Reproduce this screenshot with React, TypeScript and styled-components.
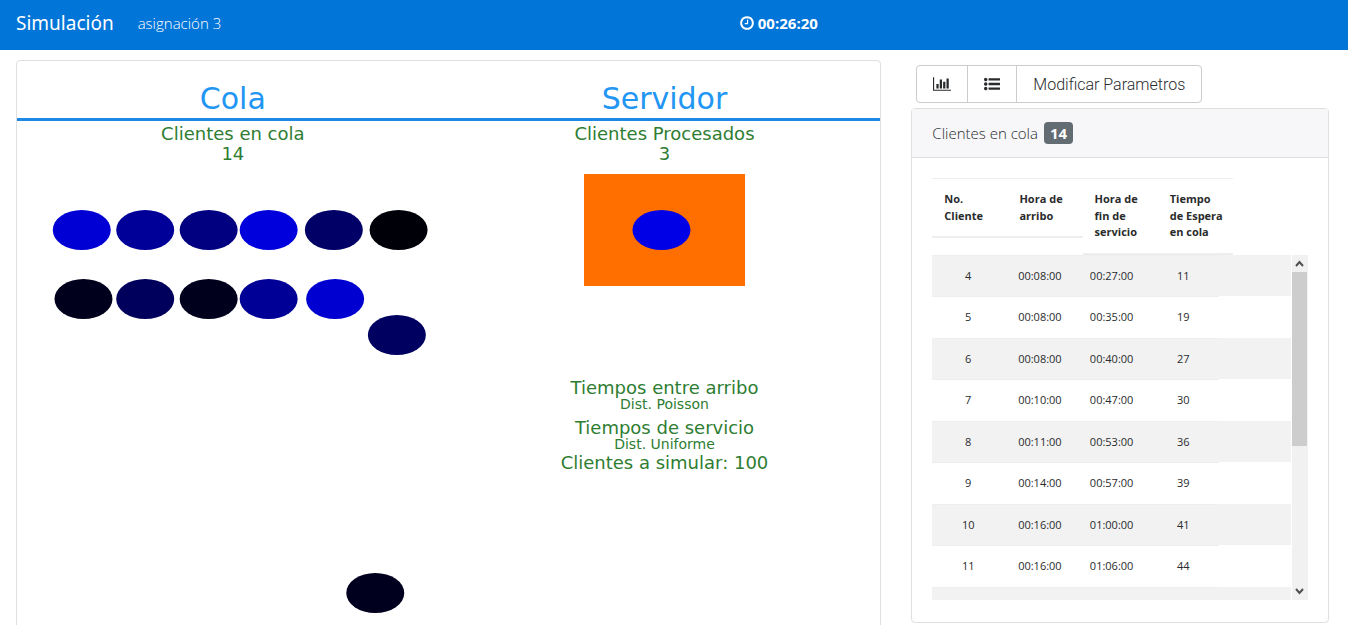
import React from "react";
import styled, { createGlobalStyle } from "styled-components";

const GlobalStyle = createGlobalStyle`
  *, *::before, *::after { box-sizing: border-box; }
  body {
    margin: 0;
    background: #fff;
    color: #292b2c;
    font-family: "Open Sans", "Noto Sans", sans-serif;
    font-size: 16px;
    line-height: 1.5;
  }
`;

const Navbar = styled.nav`
  display: flex;
  align-items: center;
  height: 50px;
  padding: 0 16px 4px;
  background: #0275d8;
  color: #fff;
`;

const NavStart = styled.div`
  display: flex;
  align-items: center;
  gap: 24px;
  flex: 0 0 55%;
`;

const Brand = styled.a`
  color: #fff;
  font-family: "Noto Sans", sans-serif;
  font-size: 19px;
  text-decoration: none;
`;

const NavText = styled.span`
  font-size: 15px;
  font-weight: 300;
`;

const Timer = styled.time`
  display: flex;
  align-items: center;
  gap: 4px;
  font-size: 15px;
  font-weight: 700;
`;

const Row = styled.main`
  display: grid;
  grid-template-columns: 2fr 1fr;
  align-items: start;
  padding: 10px 4px 0 1px;
`;

const Column = styled.div`
  min-width: 0;
  padding: 0 15px;
`;

const Card = styled.section`
  border: 1px solid #dfdfdf;
  border-radius: 4px;
  background: #fff;
`;

const Stage = styled(Card)`
  position: relative;
  display: grid;
  grid-template-columns: 1fr 1fr;
  grid-template-rows: 60px auto;
  min-height: 720px;
  font-family: "DejaVu Sans", sans-serif;
  text-align: center;
`;

const StageTitle = styled.h2`
  margin: 0;
  padding-top: 20px;
  border-bottom: 3px solid #1e88e5;
  color: #2196f3;
  font-size: 30px;
  font-weight: 400;
  line-height: 36px;
`;

const StageArea = styled.div`
  display: flex;
  flex-direction: column;
  align-items: center;
  padding-top: 4px;
  color: #2e7d32;
`;

const Counter = styled.div`
  display: grid;
  gap: 2px;
`;

const StageText = styled.p<{ $small?: boolean }>`
  margin: 0;
  font-size: ${(p) => (p.$small ? 14 : 18)}px;
  line-height: ${(p) => (p.$small ? 14 : 18)}px;
`;

const ServerBox = styled.div`
  width: 161px;
  height: 112px;
  margin: 11px 0 93px;
  background: #ff6f00;
`;

const Distributions = styled.div`
  display: grid;
  gap: 8px;
  margin-bottom: 3px;
`;

const Clients = styled.svg`
  position: absolute;
  inset: 0;
  width: 100%;
  height: 100%;
`;

const ButtonGroup = styled.div`
  display: inline-flex;
  margin: 5px;
  vertical-align: top;
`;

const Button = styled.button`
  display: flex;
  align-items: center;
  height: 38px;
  padding: 0 16px;
  border: 1px solid #ccc;
  background: #fff;
  color: #292b2c;
  font-family: Roboto, sans-serif;
  font-size: 16px;
  font-weight: 300;
  & + & { margin-left: -1px; }
  &:first-child { border-radius: 4px 0 0 4px; }
  &:last-child { border-radius: 0 4px 4px 0; }
`;

const CardHeader = styled.h3`
  display: flex;
  align-items: center;
  gap: 6px;
  height: 49px;
  margin: 0;
  padding: 0 20px;
  border-bottom: 1px solid #dfdfdf;
  background: #f7f7f9;
  font-size: 15px;
  font-weight: 300;
`;

const Badge = styled.span`
  padding: 0 6px;
  border-radius: 4px;
  background: #636c72;
  color: #fff;
  font-size: 15px;
  font-weight: 700;
  line-height: 22px;
`;

const CardBody = styled.div`
  padding: 20px 20px 22px;
`;

const TableWrap = styled.div`
  position: relative;
`;

const Table = styled.table`
  display: block;
  font-size: 11px;
`;

const Head = styled.thead`
  display: block;
  tr { display: flex; align-items: flex-start; }
`;

const HeadCell = styled.th`
  width: 20%;
  padding: 12px;
  border-top: 1px solid #eceeef;
  border-bottom: 2px solid #eceeef;
  text-align: left;
  white-space: nowrap;
`;

const Body = styled.tbody`
  display: block;
  height: 345px;
  margin-right: 17px;
  overflow-y: auto;
  scrollbar-width: none;
`;

const BodyRow = styled.tr`
  display: flex;
  &:nth-child(odd) { background: #f2f2f2; }
`;

const Cell = styled.td`
  width: 20%;
  padding: 12px 0;
  border-top: 1px solid #eceeef;
  text-align: center;
`;

const ScrollTrack = styled.div`
  position: absolute;
  right: 0;
  bottom: 0;
  display: flex;
  flex-direction: column;
  width: 16px;
  height: 345px;
  background: #f1f1f1;
`;

const ScrollThumb = styled.div`
  flex: 0 0 174px;
  margin-right: 1px;
  background: #cdcdcd;
`;

const ScrollArrow = styled.svg`
  flex: 0 0 17px;
  width: 15px;
  fill: none;
  stroke: #505050;
  stroke-width: 2;
  &:last-child { margin-top: auto; }
`;

const bar =
  "q0 13-9.5 22.5t-22.5 9.5h-1216q-13 0-22.5-9.5t-9.5-22.5v-192q0-13 9.5-22.5t22.5-9.5h1216q13 0 22.5 9.5t9.5 22.5z";
const dot = "q0 80-56 136t-136 56-136-56-56-136 56-136 136-56 136 56 56 136z";

const ClockIcon = () => (
  <svg width="14" height="16" viewBox="112 0 1568 1792" fill="currentColor" aria-hidden="true">
    <path d="M1024 544v448q0 14-9 23t-23 9h-320q-14 0-23-9t-9-23v-64q0-14 9-23t23-9h224v-352q0-14 9-23t23-9h64q14 0 23 9t9 23zm416 352q0-148-73-273t-198-198-273-73-273 73-198 198-73 273 73 273 198 198 273 73 273-73 198-198 73-273zm224 0q0 209-103 385.5t-279.5 279.5-385.5 103-385.5-103-279.5-279.5-103-385.5 103-385.5 279.5-279.5 385.5-103 385.5 103 279.5 279.5 103 385.5z" />
  </svg>
);

const ChartIcon = () => (
  <svg width="18" height="16" viewBox="0 0 2048 1792" fill="currentColor" aria-hidden="true">
    <path d="M640 896v512h-256v-512h256zm384-512v1024h-256v-1024h256zm1024 1152v128h-2048v-1536h128v1408h1920zm-640-896v768h-256v-768h256zm384-384v1152h-256v-1152h256z" />
  </svg>
);

const ListIcon = () => (
  <svg width="16" height="16" viewBox="0 0 1792 1792" fill="currentColor" aria-hidden="true">
    <path d={`M384 1408${dot}M384 896${dot}M384 384${dot}`} />
    <path d={`M1792 1504${bar}M1792 992${bar}M1792 480${bar}`} />
  </svg>
);

/* Horizontal centre in percent of the stage, vertical centre in pixels. */
const clients: [number, number, string][] = [
  [7.5, 169, "#0000d4"],
  [14.85, 169, "#000099"],
  [22.2, 169, "#000080"],
  [29.15, 169, "#0000dc"],
  [36.7, 169, "#000066"],
  [44.2, 169, "#000008"],
  [7.7, 238, "#00001c"],
  [14.85, 238, "#00005c"],
  [22.2, 238, "#00001c"],
  [29.15, 238, "#000096"],
  [36.85, 238, "#0000d0"],
  [44, 274, "#000060"],
  [41.5, 532, "#00001e"],
  [74.65, 169, "#0000e6"],
];

const headings = [
  ["No.", "Cliente"],
  ["Hora de", "arribo"],
  ["Hora de", "fin de", "servicio"],
  ["Tiempo", "de Espera", "en cola"],
];

const rows = [
  ["4", "00:08:00", "00:27:00", "11"],
  ["5", "00:08:00", "00:35:00", "19"],
  ["6", "00:08:00", "00:40:00", "27"],
  ["7", "00:10:00", "00:47:00", "30"],
  ["8", "00:11:00", "00:53:00", "36"],
  ["9", "00:14:00", "00:57:00", "39"],
  ["10", "00:16:00", "01:00:00", "41"],
  ["11", "00:16:00", "01:06:00", "44"],
  ["", "", "", ""],
];

export default function App() {
  return (
    <>
      <GlobalStyle />
      <Navbar>
        <NavStart>
          <Brand href="#">Simulación</Brand>
          <NavText>asignación 3</NavText>
        </NavStart>
        <Timer>
          <ClockIcon />
          00:26:20
        </Timer>
      </Navbar>
      <Row>
        <Column>
          <Stage>
            <StageTitle>Cola</StageTitle>
            <StageTitle>Servidor</StageTitle>
            <StageArea>
              <Counter>
                <StageText>Clientes en cola</StageText>
                <StageText>14</StageText>
              </Counter>
            </StageArea>
            <StageArea>
              <Counter>
                <StageText>Clientes Procesados</StageText>
                <StageText>3</StageText>
              </Counter>
              <ServerBox />
              <Distributions>
                <div>
                  <StageText>Tiempos entre arribo</StageText>
                  <StageText $small>Dist. Poisson</StageText>
                </div>
                <div>
                  <StageText>Tiempos de servicio</StageText>
                  <StageText $small>Dist. Uniforme</StageText>
                </div>
              </Distributions>
              <StageText>Clientes a simular: 100</StageText>
            </StageArea>
            <Clients aria-hidden="true">
              {clients.map(([x, y, fill], i) => (
                <ellipse key={i} cx={`${x}%`} cy={y} rx="29" ry="20" fill={fill} />
              ))}
            </Clients>
          </Stage>
        </Column>
        <Column>
          <ButtonGroup>
            <Button type="button" aria-label="Gráfica">
              <ChartIcon />
            </Button>
            <Button type="button" aria-label="Lista">
              <ListIcon />
            </Button>
            <Button type="button">Modificar Parametros</Button>
          </ButtonGroup>
          <Card>
            <CardHeader>
              Clientes en cola <Badge>14</Badge>
            </CardHeader>
            <CardBody>
              <TableWrap>
                <Table>
                  <Head>
                    <tr>
                      {headings.map((lines, i) => (
                        <HeadCell key={i} scope="col">
                          {lines.map((line) => (
                            <div key={line}>{line}</div>
                          ))}
                        </HeadCell>
                      ))}
                    </tr>
                  </Head>
                  <Body>
                    {rows.map((row, i) => (
                      <BodyRow key={i}>
                        {row.map((value, j) => (
                          <Cell key={j}>{value || "\u00a0"}</Cell>
                        ))}
                      </BodyRow>
                    ))}
                  </Body>
                </Table>
                <ScrollTrack aria-hidden="true">
                  <ScrollArrow viewBox="0 0 15 17">
                    <path d="M4 11l3.5-4 3.5 4" />
                  </ScrollArrow>
                  <ScrollThumb />
                  <ScrollArrow viewBox="0 0 15 17">
                    <path d="M4 6l3.5 4 3.5-4" />
                  </ScrollArrow>
                </ScrollTrack>
              </TableWrap>
            </CardBody>
          </Card>
        </Column>
      </Row>
    </>
  );
}
